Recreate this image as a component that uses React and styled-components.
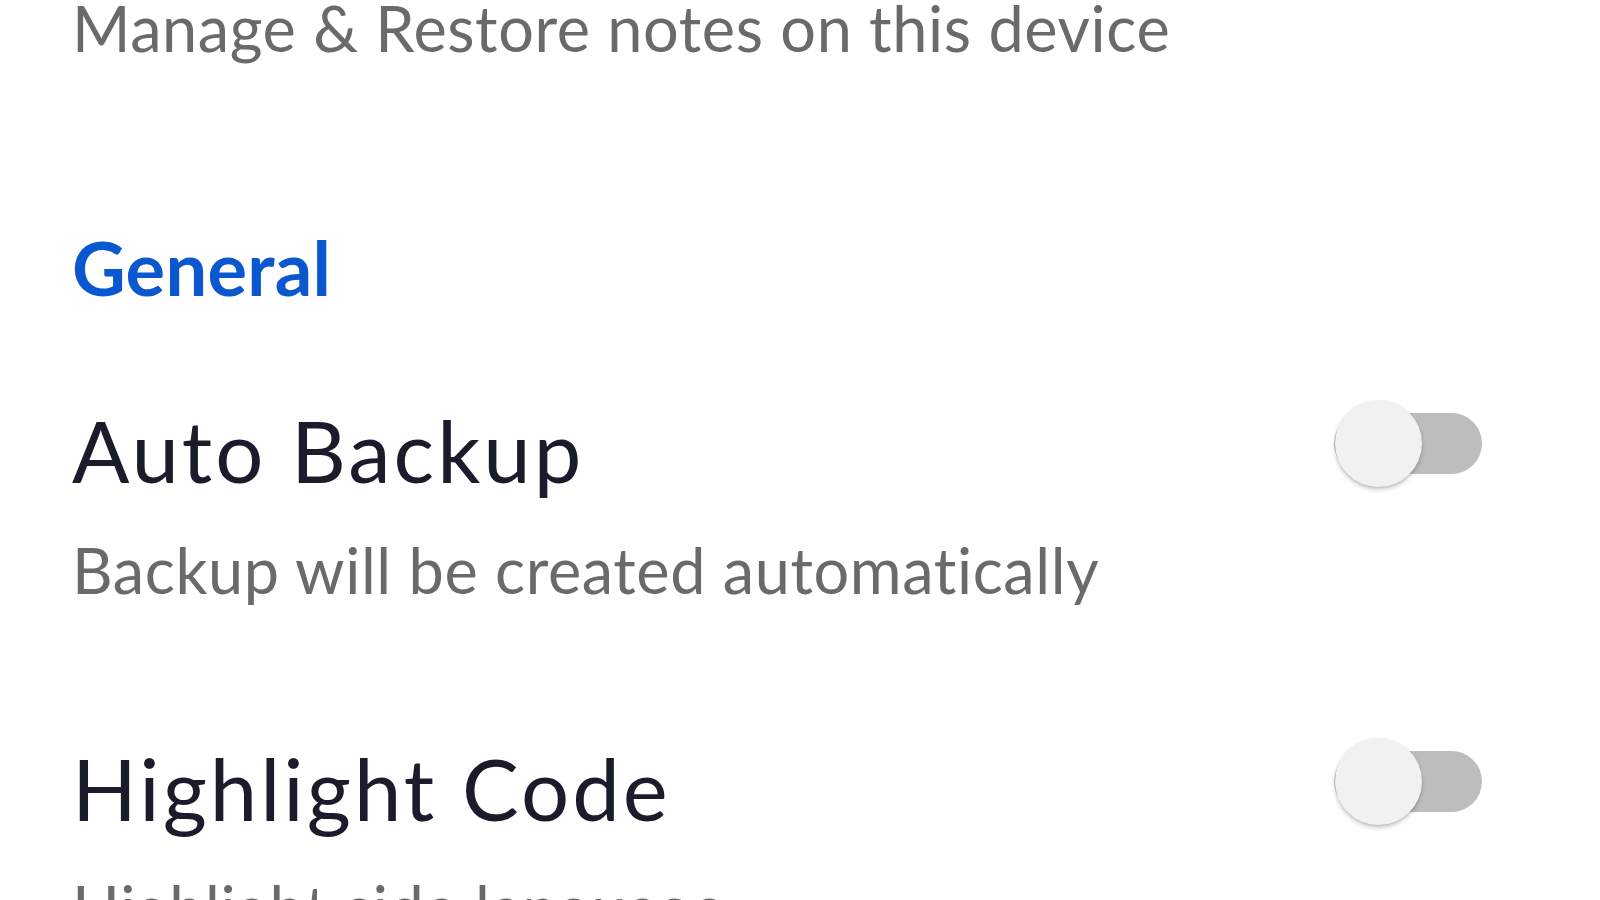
import React from "react";
import styled, { createGlobalStyle } from "styled-components";

const GlobalStyle = createGlobalStyle`
  html, body {
    margin: 0;
    padding: 0;
    background: #ffffff;
    overflow: hidden;
  }
  body {
    font-family: "Lato", "Noto Sans", sans-serif;
  }
`;

const Screen = styled.div`
  width: 1600px;
  height: 900px;
  overflow: hidden;
  background: #ffffff;
`;

const ScrollContent = styled.div`
  display: flex;
  flex-direction: column;
  margin-top: ${(p) => p.$offset}px;
  padding: 0 118px 0 72px;
`;

const Category = styled.div`
  padding: 93px 0 23px;
  font-size: 74px;
  line-height: 88px;
  font-weight: 700;
  color: #0b57d0;
  letter-spacing: 0.3px;
`;

const Item = styled.div`
  display: flex;
  align-items: flex-start;
  justify-content: space-between;
  padding: 64px 0 65px;
`;

const TextBlock = styled.div`
  display: flex;
  flex-direction: column;
  gap: 31px;
`;

const Title = styled.div`
  font-size: 85px;
  line-height: 102px;
  font-weight: 400;
  color: #1b1c2b;
  letter-spacing: 3px;
`;

const Summary = styled.div`
  font-size: 63px;
  line-height: 76px;
  font-weight: 400;
  color: #6a6a6a;
  letter-spacing: 0.6px;
`;

const SwitchTrack = styled.div`
  position: relative;
  flex: none;
  width: 148px;
  height: 87px;
  margin-top: 1px;
  &::before {
    content: "";
    position: absolute;
    left: 0;
    right: 0;
    top: 13px;
    height: 61px;
    border-radius: 31px;
    background: ${(p) => (p.$on ? "#a8c7fa" : "#bdbdbd")};
  }
`;

const SwitchThumb = styled.div`
  position: absolute;
  top: 0;
  left: ${(p) => (p.$on ? "61px" : "1px")};
  width: 87px;
  height: 87px;
  border-radius: 50%;
  background: ${(p) => (p.$on ? "#0b57d0" : "#f1f1f1")};
  box-shadow: 0 3px 4px rgba(0, 0, 0, 0.18), 0 1px 2px rgba(0, 0, 0, 0.12);
`;

function Switch({ on }) {
  return (
    <SwitchTrack $on={on} role="switch" aria-checked={on}>
      <SwitchThumb $on={on} />
    </SwitchTrack>
  );
}

function Preference({ title, summary, toggle, on }) {
  return (
    <Item>
      <TextBlock>
        <Title>{title}</Title>
        <Summary>{summary}</Summary>
      </TextBlock>
      {toggle && <Switch on={on} />}
    </Item>
  );
}

export default function App() {
  return (
    <Screen>
      <GlobalStyle />
      <ScrollContent $offset={-207}>
        <Preference title="Backup" summary="Manage & Restore notes on this device" />
        <Category>General</Category>
        <Preference
          title="Auto Backup"
          summary="Backup will be created automatically"
          toggle
          on={false}
        />
        <Preference
          title="Highlight Code"
          summary="Highlight side language"
          toggle
          on={false}
        />
      </ScrollContent>
    </Screen>
  );
}
